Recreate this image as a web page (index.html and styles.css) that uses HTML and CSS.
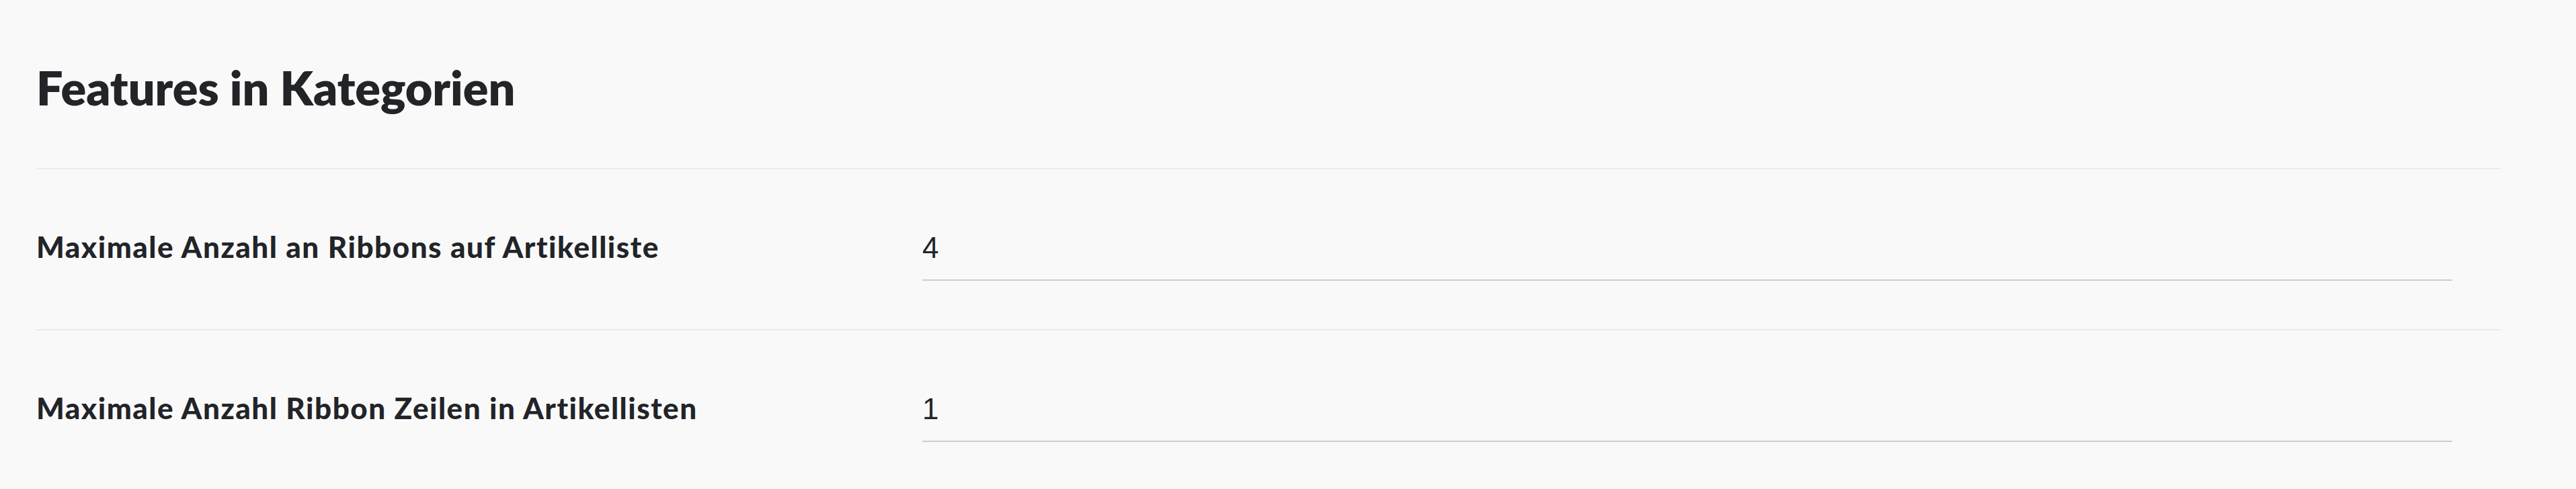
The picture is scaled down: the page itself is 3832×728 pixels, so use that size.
FILE: index.html
```html
<!DOCTYPE html>
<html lang="de">
<head>
  <meta charset="UTF-8">
  <meta name="viewport" content="width=device-width, initial-scale=1.0">
  <title>Features in Kategorien</title>
  <link rel="stylesheet" href="styles.css">
</head>
<body>
  <section class="settings">
    <div class="settings-head">
      <h1>Features in Kategorien</h1>
    </div>
    <div class="setting-row">
      <label class="setting-label" for="maxRibbons">Maximale Anzahl an Ribbons auf Artikelliste</label>
      <input class="setting-input" type="text" id="maxRibbons" value="4">
    </div>
    <div class="setting-row">
      <label class="setting-label" for="ribbonRows">Maximale Anzahl Ribbon Zeilen in Artikellisten</label>
      <input class="setting-input" type="text" id="ribbonRows" value="1">
    </div>
  </section>
</body>
</html>
```

FILE: styles.css
```css
body { margin: 0; background: #f9f9f9; color: #222428; font-family: Lato, "Open Sans", sans-serif; }
.settings { width: 3666px; margin-left: 54px; }
.settings-head { padding: 88px 0 78px; border-bottom: 2px solid #ebebeb; }
h1 { margin: 0; font-size: 70px; line-height: 84px; font-weight: 800; }
.setting-row { display: flex; align-items: flex-start; padding: 85px 72px 72px 0; border-bottom: 2px solid #ebebeb; }
.setting-label { flex: 0 0 1318px; font-size: 44px; line-height: 60px; font-weight: 900; letter-spacing: 1.5px; }
.setting-input { display: block; box-sizing: content-box; width: 2276px; height: 60px; margin: 2px 0 0; padding: 0 0 17px; border: none; border-bottom: 2px solid #c8d0c8; background: transparent; font-family: "Liberation Sans", Arial, sans-serif; font-size: 44px; line-height: 60px; color: #222428; outline: none; }
```
